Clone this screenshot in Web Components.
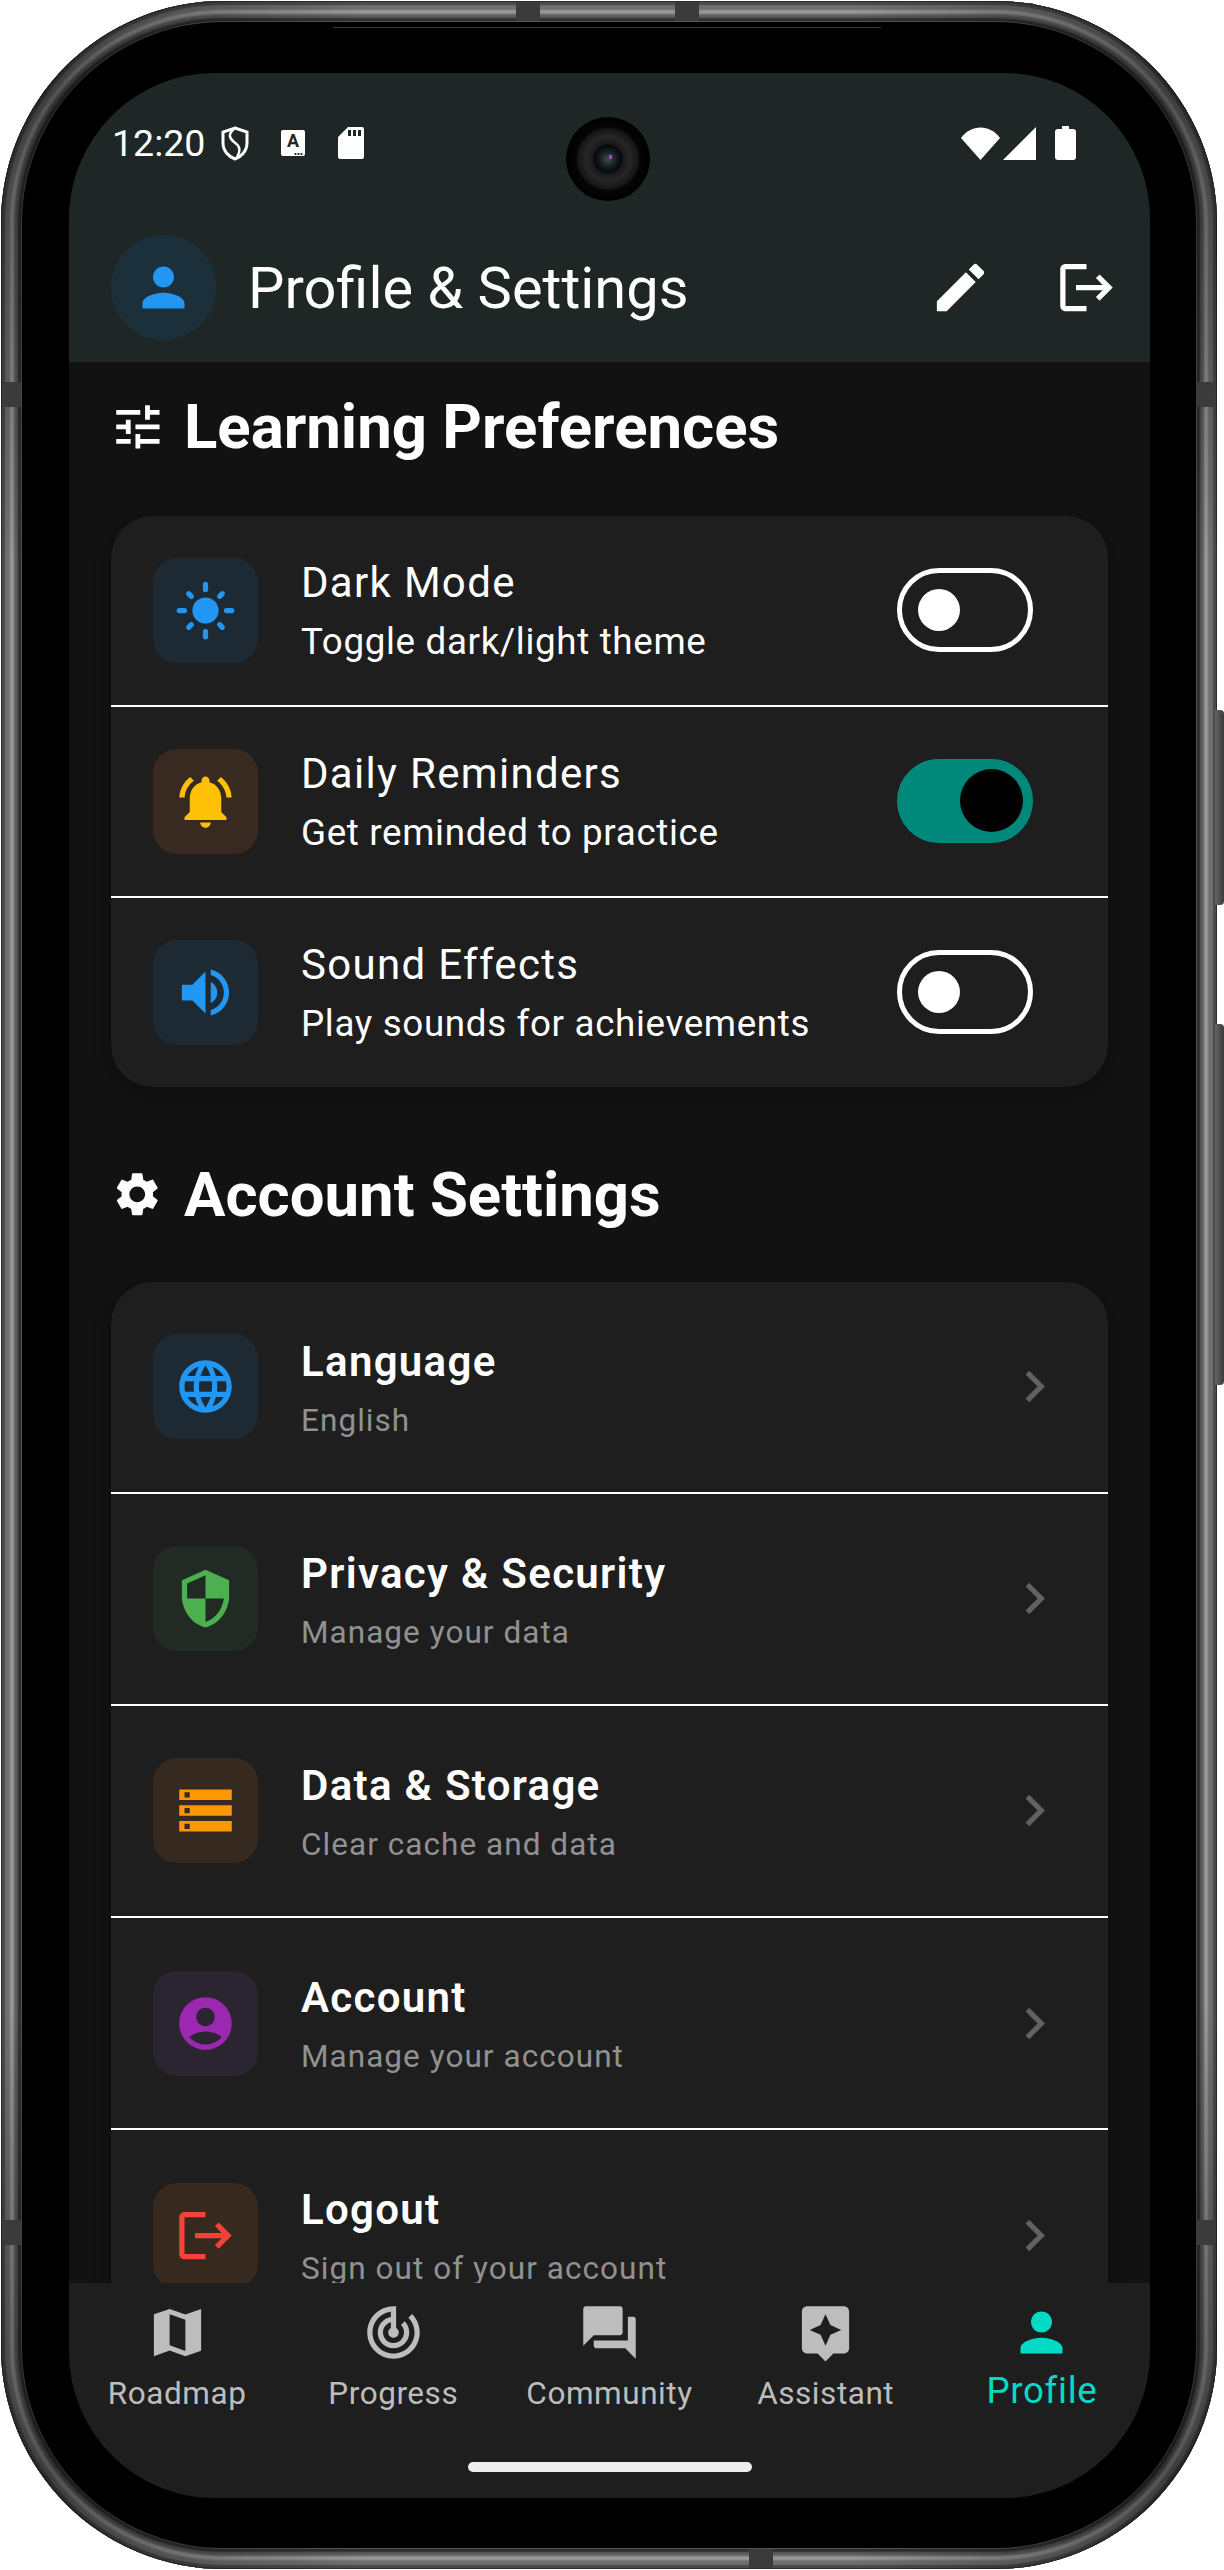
<!doctype html>
<html>
<head>
<meta charset="utf-8">
<title>Profile &amp; Settings</title>
<style>
  html, body { margin: 0; background: #fff; }
  body { font-family: Roboto, "Liberation Sans", sans-serif; }
</style>
</head>
<body>

<device-frame>
  <status-bar></status-bar>
  <app-bar heading="Profile &amp; Settings"></app-bar>
  <settings-page>
    <section-heading icon="tune" size="57.750">Learning Preferences</section-heading>
    <settings-card>
      <pref-row icon="sun" tint="#2196f3" wash="#1e2a33" label="Dark Mode" note="Toggle dark/light theme"></pref-row>
      <pref-row icon="bell" tint="#ffc107" wash="#382a20" label="Daily Reminders" note="Get reminded to practice" on></pref-row>
      <pref-row icon="volume" tint="#2196f3" wash="#1e2a33" label="Sound Effects" note="Play sounds for achievements"></pref-row>
    </settings-card>
    <section-heading icon="settings" size="52.500" style="margin-top:68px;margin-bottom:47px">Account Settings</section-heading>
    <settings-card>
      <link-row icon="language" tint="#2196f3" wash="#1e2a33" label="Language" note="English"></link-row>
      <link-row icon="security" tint="#4caf50" wash="#212a23" label="Privacy &amp; Security" note="Manage your data"></link-row>
      <link-row icon="storage" tint="#ff9800" wash="#36291f" label="Data &amp; Storage" note="Clear cache and data"></link-row>
      <link-row icon="account" tint="#9c27b0" wash="#2a2530" label="Account" note="Manage your account"></link-row>
      <link-row icon="logout" tint="#f44336" wash="#38291f" label="Logout" note="Sign out of your account"></link-row>
    </settings-card>
  </settings-page>
  <bottom-nav>
    <nav-tab icon="map">Roadmap</nav-tab>
    <nav-tab icon="track">Progress</nav-tab>
    <nav-tab icon="forum">Community</nav-tab>
    <nav-tab icon="assistant">Assistant</nav-tab>
    <nav-tab icon="person" active>Profile</nav-tab>
  </bottom-nav>
</device-frame>

<script>
const ICONS = {
  person: '<path d="M12 12c2.21 0 4-1.79 4-4s-1.79-4-4-4-4 1.79-4 4 1.79 4 4 4zm0 2c-2.67 0-8 1.34-8 4v2h16v-2c0-2.66-5.33-4-8-4z"/>',
  edit: '<path d="M3 17.25V21h3.75L17.81 9.94l-3.75-3.75L3 17.25zM20.71 7.04c.39-.39.39-1.02 0-1.41l-2.34-2.34c-.39-.39-1.02-.39-1.41 0l-1.83 1.83 3.75 3.75 1.83-1.83z"/>',
  logout: '<path d="M17 7l-1.41 1.41L18.17 11H8v2h10.17l-2.58 2.58L17 17l5-5zM4 5h8V3H4c-1.1 0-2 .9-2 2v14c0 1.1.9 2 2 2h8v-2H4V5z"/>',
  tune: '<path d="M3 17v2h6v-2H3zM3 5v2h10V5H3zm10 16v-2h8v-2h-8v-2h-2v6h2zM7 9v2H3v2h4v2h2V9H7zm14 4v-2H11v2h10zm-6-4h2V7h4V5h-4V3h-2v6z"/>',
  settings: '<path d="M19.14 12.94c.04-.3.06-.61.06-.94 0-.32-.02-.64-.07-.94l2.03-1.58c.18-.14.23-.41.12-.61l-1.92-3.32c-.12-.22-.37-.29-.59-.22l-2.39.96c-.5-.38-1.03-.7-1.62-.94l-.36-2.54c-.04-.24-.24-.41-.48-.41h-3.84c-.24 0-.43.17-.47.41l-.36 2.54c-.59.24-1.13.57-1.62.94l-2.39-.96c-.22-.08-.47 0-.59.22L2.74 8.87c-.12.21-.08.47.12.61l2.03 1.58c-.05.3-.09.63-.09.94s.02.64.07.94l-2.03 1.58c-.18.14-.23.41-.12.61l1.92 3.32c.12.22.37.29.59.22l2.39-.96c.5.38 1.03.7 1.62.94l.36 2.54c.05.24.24.41.48.41h3.84c.24 0 .44-.17.47-.41l.36-2.54c.59-.24 1.13-.56 1.62-.94l2.39.96c.22.08.47 0 .59-.22l1.92-3.32c.12-.22.07-.47-.12-.61l-2.01-1.58zM12 15.6c-1.98 0-3.6-1.62-3.6-3.6s1.62-3.6 3.6-3.6 3.6 1.62 3.6 3.6-1.62 3.6-3.6 3.6z"/>',
  sun: '<circle cx="12" cy="12" r="5"/><g stroke="currentColor" stroke-width="2" stroke-linecap="round"><path d="M2 12h2M20 12h2M12 2v2M12 20v2M5.6 5.6l1 1M17.4 17.4l1 1M18.4 5.6l-1 1M6.6 17.4l-1 1"/></g>',
  bell: '<path d="M7.58 4.08L6.15 2.65C3.75 4.48 2.17 7.3 2.03 10.5h2c.15-2.65 1.51-4.97 3.55-6.42zm12.39 6.42h2c-.15-3.2-1.73-6.02-4.12-7.85l-1.42 1.43c2.02 1.45 3.39 3.77 3.54 6.42zM18 11c0-3.07-1.64-5.64-4.5-6.32V4c0-.83-.67-1.5-1.5-1.5s-1.5.67-1.5 1.5v.68C7.63 5.36 6 7.92 6 11v5l-2 2v1h16v-1l-2-2v-5zm-6 11c.14 0 .27-.01.4-.04.65-.14 1.18-.58 1.44-1.18.1-.24.15-.5.15-.78h-4c.01 1.1.9 2 2.01 2z"/>',
  volume: '<path d="M3 9v6h4l5 5V4L7 9H3zm13.5 3c0-1.77-1.02-3.29-2.5-4.03v8.05c1.48-.73 2.5-2.25 2.5-4.02zM14 3.23v2.06c2.89.86 5 3.54 5 6.71s-2.11 5.85-5 6.71v2.06c4.01-.91 7-4.49 7-8.77s-2.99-7.86-7-8.77z"/>',
  language: '<path d="M11.99 2C6.47 2 2 6.48 2 12s4.47 10 9.99 10C17.52 22 22 17.52 22 12S17.52 2 11.99 2zm6.93 6h-2.95c-.32-1.25-.78-2.45-1.38-3.56 1.84.63 3.37 1.91 4.33 3.56zM12 4.04c.83 1.2 1.48 2.53 1.91 3.96h-3.82c.43-1.43 1.08-2.76 1.91-3.96zM4.26 14C4.1 13.36 4 12.69 4 12s.1-1.36.26-2h3.38c-.08.66-.14 1.32-.14 2 0 .68.06 1.34.14 2H4.26zm.82 2h2.95c.32 1.25.78 2.45 1.38 3.56-1.84-.63-3.37-1.9-4.33-3.56zm2.95-8H5.08c.96-1.66 2.49-2.93 4.33-3.56C8.81 5.55 8.35 6.75 8.03 8zM12 19.96c-.83-1.2-1.48-2.53-1.91-3.96h3.82c-.43 1.43-1.08 2.76-1.91 3.96zM14.34 14H9.66c-.09-.66-.16-1.32-.16-2 0-.68.07-1.35.16-2h4.68c.09.65.16 1.32.16 2 0 .68-.07 1.34-.16 2zm.25 5.56c.6-1.11 1.06-2.31 1.38-3.56h2.95c-.96 1.65-2.49 2.93-4.33 3.56zM16.36 14c.08-.66.14-1.32.14-2 0-.68-.06-1.34-.14-2h3.38c.16.64.26 1.31.26 2s-.1 1.36-.26 2h-3.38z"/>',
  security: '<path d="M12 1L3 5v6c0 5.55 3.84 10.74 9 12 5.16-1.26 9-6.45 9-12V5l-9-4zm0 10.99h7c-.53 4.12-3.28 7.79-7 8.94V12H5V6.3l7-3.11v8.8z"/>',
  storage: '<path d="M2 20h20v-4H2v4zm2-3h2v2H4v-2zM2 4v4h20V4H2zm4 3H4V5h2v2zm-4 7h20v-4H2v4zm2-3h2v2H4v-2z"/>',
  account: '<path d="M12 2C6.48 2 2 6.48 2 12s4.48 10 10 10 10-4.48 10-10S17.52 2 12 2zm0 4c1.93 0 3.5 1.57 3.5 3.5S13.93 13 12 13s-3.5-1.57-3.5-3.5S10.07 6 12 6zm0 14c-2.03 0-4.43-.82-6.14-2.88C7.55 15.8 9.68 15 12 15s4.45.8 6.14 2.12C16.43 19.18 14.03 20 12 20z"/>',
  chevron: '<path d="M10 6L8.59 7.41 13.17 12l-4.58 4.59L10 18l6-6z"/>',
  map: '<path d="M21 3l-6 2.1L9 3 3 5.02V21l6-2.1 6 2.1 6-2.02V3zM15 19l-6-2.11V5l6 2.11V19z"/>',
  track: '<path d="M19.07 4.93l-1.41 1.41C19.1 7.79 20 9.79 20 12c0 4.42-3.58 8-8 8s-8-3.58-8-8c0-4.08 3.05-7.44 7-7.93v2.02C8.16 6.57 6 9.03 6 12c0 3.31 2.69 6 6 6s6-2.69 6-6c0-1.66-.67-3.16-1.76-4.24l-1.41 1.41C15.55 9.9 16 10.9 16 12c0 2.21-1.79 4-4 4s-4-1.79-4-4c0-1.86 1.28-3.41 3-3.86v2.14c-.6.35-1 .98-1 1.72 0 1.1.9 2 2 2s2-.9 2-2c0-.74-.4-1.38-1-1.72V2h-1C6.48 2 2 6.48 2 12s4.48 10 10 10 10-4.48 10-10c0-2.76-1.12-5.26-2.93-7.07z"/>',
  forum: '<path d="M21 6h-2v9H6v2c0 .55.45 1 1 1h11l4 4V7c0-.55-.45-1-1-1zm-4 6V3c0-.55-.45-1-1-1H3c-.55 0-1 .45-1 1v14l4-4h10c.55 0 1-.45 1-1z"/>',
  assistant: '<path d="M19 2H5c-1.1 0-2 .9-2 2v14c0 1.1.9 2 2 2h4l3 3 3-3h4c1.1 0 2-.9 2-2V4c0-1.1-.9-2-2-2zm-5.12 10.88L12 17l-1.88-4.12L6 11l4.12-1.88L12 5l1.88 4.12L18 11l-4.12 1.88z"/>'
};

// all sizes below are device pixels, 1dp = 2.625px
class MatIcon extends HTMLElement {
  connectedCallback() {
    const size = this.getAttribute('size') || 63;
    const root = this.shadowRoot || this.attachShadow({mode: 'open'});
    root.innerHTML = `
      <style>
        :host { display: block; width: ${size}px; height: ${size}px; flex: none; }
        svg { display: block; width: 100%; height: 100%; fill: currentColor; }
      </style>
      <svg viewBox="0 0 24 24">${ICONS[this.getAttribute('name')]}</svg>`;
  }
}

class DeviceFrame extends HTMLElement {
  constructor() {
    super();
    this.attachShadow({mode: 'open'}).innerHTML = `
      <style>
        :host { display: block; width: 1224px; height: 2570px; position: relative; overflow: hidden; }
        .body {
          box-sizing: border-box; width: 1216px; height: 2568px; margin: 1px 0 0 1px; position: relative;
          padding: 72px 67px 71px 68px; border-radius: 222px; background: #000;
          box-shadow: inset 0 0 0 1px #2c2c2c, inset 0 0 1px 4px #4a4a4a, inset 0 0 2px 9px #6f6f6f,
            inset 0 0 2px 13px #9a9a9a, inset 0 0 2px 17px #5e5e5e, inset 0 0 0 20px #2e2e2e, inset 0 0 0 21px #555;
        }
        /* the metal goes darker round the corners */
        .body::before {
          content: ""; position: absolute; inset: 0; border-radius: 222px;
          background: conic-gradient(transparent 0 3%, rgba(0,0,0,.45) 7%, transparent 11% 39%, rgba(0,0,0,.45) 43%, transparent 47% 53%, rgba(0,0,0,.45) 57%, transparent 61% 89%, rgba(0,0,0,.45) 93%, transparent 97%);
        }
        .screen {
          height: 100%; border-radius: 146px; overflow: hidden; background: #121212; position: relative;
          display: flex; flex-direction: column; color: #fff;
        }
        .cam {
          position: absolute; left: 566px; top: 117px; width: 84px; height: 84px; border-radius: 50%;
          background: radial-gradient(circle at 50% 50%, #3c4a50 0, #14181b 9px, #070809 14px, #18181a 15px, #262627 22px, #161617 30px, #050505 32px, #000 42px);
        }
        .cam::after {
          content: ""; position: absolute; left: 43px; top: 38px; width: 3px; height: 4px; background: #b13fc0;
        }
        .band { position: absolute; background: #3b3b3b; }
        .notch { position: absolute; left: 333px; top: 22px; width: 548px; height: 5px; border-bottom: 1px solid #3a3a3a; }
        .btn { position: absolute; left: 1215px; width: 9px; border-radius: 0 4px 4px 0; background: linear-gradient(90deg, #666, #3a3a3a); }
      </style>
      <div class="body"><div class="screen"><slot></slot></div></div>
      <div class="cam"></div>
      <div class="notch"></div>
      <div class="band" style="left:516px;top:2px;width:24px;height:19px"></div>
      <div class="band" style="left:675px;top:2px;width:24px;height:19px"></div>
      <div class="band" style="left:749px;top:2549px;width:24px;height:19px"></div>
      <div class="band" style="left:2px;top:382px;width:19px;height:25px"></div>
      <div class="band" style="left:2px;top:2220px;width:19px;height:25px"></div>
      <div class="band" style="left:1196px;top:382px;width:19px;height:25px"></div>
      <div class="band" style="left:1196px;top:2220px;width:19px;height:25px"></div>
      <div class="btn" style="top:710px;height:195px"></div>
      <div class="btn" style="top:1024px;height:361px"></div>`;
  }
}

class StatusBar extends HTMLElement {
  constructor() {
    super();
    this.attachShadow({mode: 'open'}).innerHTML = `
      <style>
        :host {
          display: flex; align-items: center; height: 140px; padding: 0 74px 0 43px; flex: none;
          background: #1e2726; color: #fff; font-size: 37.500px;
        }
        svg { display: block; fill: #fff; }
        .time { width: 108px; }
        .a {
          width: 24px; height: 26px; margin-left: 31px; border-radius: 2px; background: #fff; color: #1e2726;
          font: 700 18px/22px Roboto, sans-serif; text-align: center; position: relative;
        }
        .a i { position: absolute; right: 2px; bottom: 1px; width: 9px; height: 2px;
          background: radial-gradient(circle, #1e2726 1px, transparent 1.2px) 0 0 / 3px 2px; }
        .gap { flex: 1; }
      </style>
      <span class="time">12:20</span>
      <svg width="30" height="35" viewBox="0 0 30 35" style="fill:none;stroke:#fff;stroke-width:3">
        <path d="M15 2 L27 6 V17 C27 25 21 31 15 33 C9 31 3 25 3 17 V6 Z"/>
        <path d="M14 3 C8 8 9 12 14 16 C20 20 21 24 17 31" stroke-width="2.5"/>
      </svg>
      <div class="a">A<i></i></div>
      <svg width="26" height="32" viewBox="0 0 26 32" style="margin-left:33px">
        <path fill-rule="evenodd" d="M10 0H24a2 2 0 0 1 2 2V30a2 2 0 0 1-2 2H2a2 2 0 0 1-2-2V10zM10 3v6h3V3zM15 3v6h3V3zM20 3v6h3V3z"/>
      </svg>
      <div class="gap"></div>
      <svg width="39" height="33" viewBox="0 0 39 33"><path d="M0 11 C10 -3 29 -3 39 11 L19.500 33z"/></svg>
      <svg width="33" height="33" viewBox="0 0 33 33" style="margin-left:3px"><path d="M33 0V33H0z"/></svg>
      <svg width="21" height="34" viewBox="0 0 21 34" style="margin-left:19px"><path d="M7 0h7v3h4a3 3 0 0 1 3 3V31a3 3 0 0 1-3 3H3a3 3 0 0 1-3-3V6a3 3 0 0 1 3-3h4z"/></svg>`;
  }
}

class AppBar extends HTMLElement {
  constructor() {
    super();
    this.attachShadow({mode: 'open'}).innerHTML = `
      <style>
        :host {
          display: flex; align-items: center; height: 149px; padding: 0 0 0 42px; box-sizing: border-box; flex: none;
          background: #1e2726; color: #fff;
        }
        .avatar {
          width: 105px; height: 105px; border-radius: 50%; background: #1c303c; color: #2196f3;
          display: flex; align-items: center; justify-content: center; flex: none;
        }
        h1 { margin: 0 0 0 32px; flex: 1; font: 400 57.750px/76px Roboto, sans-serif; }
        .act { width: 126.500px; height: 126px; display: flex; align-items: center; justify-content: center; flex: none; }
      </style>
      <div class="avatar"><mat-icon name="person"></mat-icon></div>
      <h1></h1>
      <div class="act"><mat-icon name="edit"></mat-icon></div>
      <div class="act"><mat-icon name="logout"></mat-icon></div>`;
    this.shadowRoot.querySelector('h1').textContent = this.getAttribute('heading');
  }
}

class SettingsPage extends HTMLElement {
  constructor() {
    super();
    this.attachShadow({mode: 'open'}).innerHTML = `
      <style>
        :host { display: block; flex: 1; min-height: 0; overflow: hidden; padding: 25px 42px 0; background: #121212; }
      </style>
      <slot></slot>`;
  }
}

class SectionHeading extends HTMLElement {
  constructor() {
    super();
    this.attachShadow({mode: 'open'}).innerHTML = `
      <style>
        :host { display: flex; align-items: center; gap: 15px; height: 80px; margin: 0 0 48.500px -5px; color: #fff;
          font: 700 61.700px/80px Roboto, sans-serif; }
        .ic { width: 63px; display: flex; justify-content: center; flex: none; }
      </style>
      <div class="ic"><mat-icon name="${this.getAttribute('icon')}" size="${this.getAttribute('size')}"></mat-icon></div>
      <slot></slot>`;
  }
}

class SettingsCard extends HTMLElement {
  constructor() {
    super();
    this.attachShadow({mode: 'open'}).innerHTML = `
      <style>
        :host { display: block; border-radius: 42px; background: #1e1e1e; box-shadow: 0 5px 16px 6px rgba(0,0,0,.18); }
        ::slotted(:not(:last-child)) { border-bottom: 2.625px solid #fff; }
      </style>
      <slot></slot>`;
  }
}

class ToggleSwitch extends HTMLElement {
  constructor() {
    super();
    this.attachShadow({mode: 'open'}).innerHTML = `
      <style>
        :host { display: flex; align-items: center; box-sizing: border-box; width: 136px; height: 84px; flex: none;
          border: 5.250px solid #fff; border-radius: 42px; padding-left: 16px; }
        :host([on]) { background: #00897b; border-color: #00897b; padding-left: 58px; }
        i { display: block; width: 42px; height: 42px; border-radius: 50%; background: #fff; }
        :host([on]) i { width: 63px; height: 63px; background: #000; }
      </style>
      <i></i>`;
  }
}

const ROW_STYLE = `
  :host { display: flex; align-items: center; box-sizing: content-box; padding: 0 42px; color: #fff; }
  .box { width: 105px; height: 105px; border-radius: 24px; display: flex; align-items: center; justify-content: center; flex: none; }
  .txt { flex: 1; margin-left: 43px; min-width: 0; }
  .t, .s { white-space: nowrap; }
`;

function rowMarkup(el, right) {
  return `
    <div class="box" style="background:${el.getAttribute('wash')};color:${el.getAttribute('tint')}">
      <mat-icon name="${el.getAttribute('icon')}"></mat-icon>
    </div>
    <div class="txt"><div class="t"></div><div class="s"></div></div>
    ${right}`;
}

class PrefRow extends HTMLElement {
  constructor() {
    super();
    const on = this.hasAttribute('on') ? 'on' : '';
    this.attachShadow({mode: 'open'}).innerHTML = `
      <style>${ROW_STYLE}
        :host { height: 189px; }
        .txt { padding-top: 1px; }
        .t { font: 400 42px/56px Roboto, sans-serif; letter-spacing: 1.31px; margin-bottom: 7px; }
        .s { font: 400 36.750px/48px Roboto, sans-serif; letter-spacing: .66px; }
        toggle-switch { margin: 0 33px 1px 0; }
      </style>` + rowMarkup(this, `<toggle-switch ${on}></toggle-switch>`);
    this.shadowRoot.querySelector('.t').textContent = this.getAttribute('label');
    this.shadowRoot.querySelector('.s').textContent = this.getAttribute('note');
  }
}

class LinkRow extends HTMLElement {
  constructor() {
    super();
    this.attachShadow({mode: 'open'}).innerHTML = `
      <style>${ROW_STYLE}
        :host { height: 210.200px; }
        .txt { padding-top: 7px; }
        .t { font: 600 42px/50px Roboto, sans-serif; letter-spacing: 1.31px; margin-bottom: 11px; }
        .s { font: 400 31.500px/46px Roboto, sans-serif; letter-spacing: 1.05px; color: #919191; }
        mat-icon.go { color: #616161; }
      </style>` + rowMarkup(this, `<mat-icon class="go" name="chevron"></mat-icon>`);
    this.shadowRoot.querySelector('.t').textContent = this.getAttribute('label');
    this.shadowRoot.querySelector('.s').textContent = this.getAttribute('note');
  }
}

class BottomNav extends HTMLElement {
  constructor() {
    super();
    this.attachShadow({mode: 'open'}).innerHTML = `
      <style>
        :host { display: block; height: 215px; flex: none; background: #1e1e1e; position: relative; z-index: 1; }
        .tabs { display: grid; grid-template-columns: repeat(5, 1fr); padding-top: 18px; }
        .home { width: 284px; height: 10px; margin: 50px auto 0; border-radius: 5px; background: #ededed; }
      </style>
      <div class="tabs"><slot></slot></div>
      <div class="home"></div>`;
  }
}

class NavTab extends HTMLElement {
  constructor() {
    super();
    this.attachShadow({mode: 'open'}).innerHTML = `
      <style>
        :host { display: flex; flex-direction: column; align-items: center; color: #bdbdbd;
          font: 400 31.500px/36px Roboto, sans-serif; letter-spacing: .55px; }
        :host([active]) { color: #03dac6; font-size: 36.750px; letter-spacing: .66px; }
        .lab { margin-top: 12px; height: 36px; }
        :host([active]) .lab { margin-top: 9px; }
      </style>
      <mat-icon name="${this.getAttribute('icon')}"></mat-icon>
      <div class="lab"><slot></slot></div>`;
  }
}

customElements.define('mat-icon', MatIcon);
customElements.define('device-frame', DeviceFrame);
customElements.define('status-bar', StatusBar);
customElements.define('app-bar', AppBar);
customElements.define('settings-page', SettingsPage);
customElements.define('section-heading', SectionHeading);
customElements.define('settings-card', SettingsCard);
customElements.define('toggle-switch', ToggleSwitch);
customElements.define('pref-row', PrefRow);
customElements.define('link-row', LinkRow);
customElements.define('bottom-nav', BottomNav);
customElements.define('nav-tab', NavTab);
</script>
</body>
</html>
